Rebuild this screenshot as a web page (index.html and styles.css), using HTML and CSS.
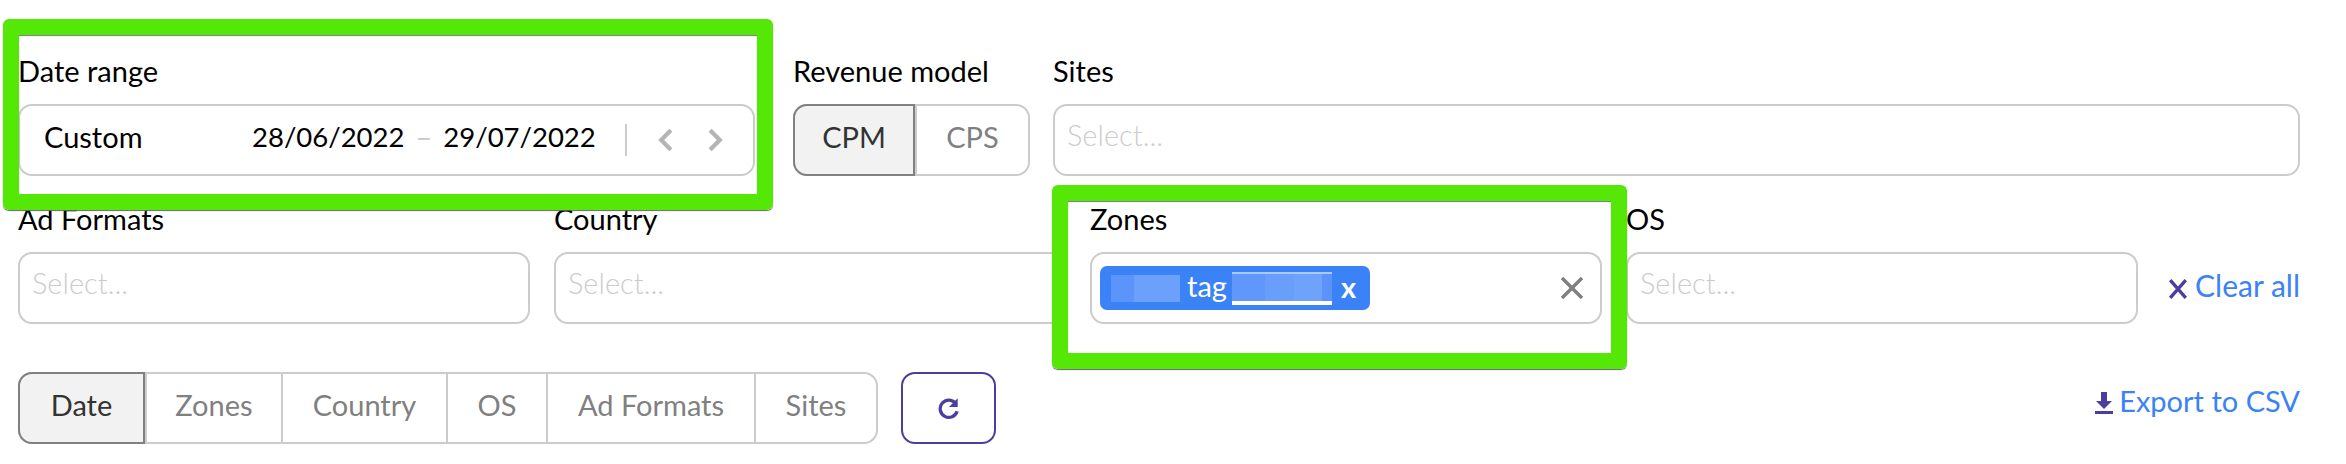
FILE: index.html
```html
<!DOCTYPE html>
<html>
<head>
    <title>Statistics filters</title>
    <link rel="stylesheet" href="styles.css">
</head>
<body>
    <form class="filters">
        <div class="row row-top">
            <div class="field field-date">
                <label>Date range</label>
                <div class="box date-box">
                    <span class="date-preset">Custom</span>
                    <span class="date-text">28/06/2022</span>
                    <span class="date-dash">–</span>
                    <span class="date-text">29/07/2022</span>
                    <span class="date-sep"></span>
                    <svg class="chevron chevron-prev" viewBox="0 0 14 22"><path d="M12 2 3 11l9 9"/></svg>
                    <svg class="chevron chevron-next" viewBox="0 0 14 22"><path d="M2 2l9 9-9 9"/></svg>
                </div>
            </div>
            <div class="field field-model">
                <label>Revenue model</label>
                <div class="segments">
                    <span class="segment active model-cpm">CPM</span>
                    <span class="segment model-cps">CPS</span>
                </div>
            </div>
            <div class="field field-grow">
                <label>Sites</label>
                <div class="box select"><span class="placeholder">Select...</span></div>
            </div>
        </div>

        <div class="row row-middle">
            <div class="field field-col">
                <label>Ad Formats</label>
                <div class="box select"><span class="placeholder">Select...</span></div>
            </div>
            <div class="field field-col">
                <label>Country</label>
                <div class="box select"><span class="placeholder">Select...</span></div>
            </div>
            <div class="field field-col">
                <label>Zones</label>
                <div class="box select select-zones">
                    <span class="tag">
                        <span class="blur blur-a"></span>
                        <span class="tag-text">tag</span>
                        <span class="blur blur-b"></span>
                        <span class="tag-x">x</span>
                    </span>
                    <svg class="clear-icon" viewBox="0 0 24 24"><path d="M2 2l20 20M22 2 2 22"/></svg>
                </div>
            </div>
            <div class="field field-col">
                <label>OS</label>
                <div class="box select"><span class="placeholder">Select...</span></div>
            </div>
            <a class="link link-clear" href="#">
                <svg class="link-x" viewBox="0 0 18 18"><path d="M2 1l14 16M16 1 2 17"/></svg>Clear all
            </a>
        </div>

        <div class="row row-bottom">
            <div class="segments">
                <span class="segment active group-date">Date</span>
                <span class="segment group-zones">Zones</span>
                <span class="segment group-country">Country</span>
                <span class="segment group-os">OS</span>
                <span class="segment group-formats">Ad Formats</span>
                <span class="segment group-sites">Sites</span>
            </div>
            <button class="refresh" type="button">
                <svg viewBox="0 0 20 24"><path d="M16 7.5A8 8 0 1 0 17.5 15"/><path class="fill" d="M18 3v8h-8z"/></svg>
            </button>
            <a class="link link-export" href="#">
                <svg class="download" viewBox="0 0 18 24"><path class="fill" d="M6 1h6v9h5l-8 8-8-8h5zM0 20h18v3H0z"/></svg>Export to CSV
            </a>
        </div>
    </form>

    <div class="mark mark-date"></div>
    <div class="mark mark-zones"></div>
</body>
</html>
```

FILE: styles.css
```css
* {
    box-sizing: border-box;
}

body {
    margin: 0;
    background-color: white;
    color: black;
    font-family: Lato, sans-serif;
    font-size: 29px;
    height: 464px;
    overflow: hidden;
    position: relative;
}

.filters {
    padding: 55px 46px 0 18px;
}

.row {
    display: flex;
}

.row-middle {
    margin-top: 27px;
    gap: 24px;
}

.row-bottom {
    margin-top: 48px;
    align-items: center;
}

.field label {
    display: block;
    height: 34px;
    line-height: 31px;
    margin-bottom: 15px;
}

.field-date {
    width: 737px;
    margin-right: 38px;
}

.field-model {
    width: 237px;
    margin-right: 23px;
}

.field-grow {
    flex: 1;
}

.field-col {
    width: 512px;
}

.box {
    height: 72px;
    border: 2px solid #ccc;
    border-radius: 14px;
    background-color: white;
}

.date-box {
    display: flex;
    align-items: center;
    padding-left: 24px;
}

.date-preset {
    width: 208px;
    padding-bottom: 8px;
}

.date-text {
    font-size: 27.5px;
    padding-bottom: 7px;
}

.date-dash {
    color: #ccc;
    margin: 0 11px;
    padding-bottom: 7px;
}

.date-sep {
    width: 2px;
    height: 32px;
    background-color: #ccc;
    margin: 0 31px 0 29px;
}

.chevron {
    width: 15px;
    height: 24px;
    fill: none;
    stroke: #b5b5b5;
    stroke-width: 4;
}

.chevron-next {
    margin-left: 35px;
}

.select {
    padding: 0 12px;
    display: flex;
    align-items: center;
}

.placeholder {
    color: #ccc;
    font-weight: 300;
    padding-bottom: 11px;
}

.segments {
    display: flex;
    height: 72px;
    border: 2px solid #ccc;
    border-radius: 14px;
    color: #808080;
}

.segment {
    display: flex;
    align-items: center;
    justify-content: center;
    border-left: 2px solid #ccc;
    padding-bottom: 7px;
}

.segment:first-child {
    border-left: none;
}

.segment.active {
    margin: -2px 0 -2px -2px;
    border: 2px solid #808080;
    border-radius: 14px 0 0 14px;
    background-color: #f2f2f2;
    color: #333;
}

.model-cpm {
    width: 122px;
}

.model-cps {
    flex: 1;
}

.group-date {
    width: 127px;
}

.group-zones {
    width: 136px;
}

.group-country {
    width: 165px;
}

.group-os {
    width: 100px;
}

.group-formats {
    width: 208px;
}

.group-sites {
    width: 122px;
}

.select-zones {
    justify-content: space-between;
    padding: 0 16px 0 8px;
}

.tag {
    display: flex;
    align-items: center;
    width: 270px;
    height: 44px;
    padding-left: 11px;
    border-radius: 7px;
    background-color: #3c82f7;
    color: white;
}

.tag-text {
    margin: 0 8px 0 7px;
    width: 37px;
    padding-bottom: 5px;
    white-space: nowrap;
}

.blur {
    display: block;
    height: 27px;
}

.blur-a {
    width: 69px;
    background: linear-gradient(90deg, #5b94fa 33%, #6ba0fb 33%);
}

.blur-b {
    width: 100px;
    height: 33px;
    background: linear-gradient(90deg, #5f97fa 33%, #6a9efb 33%, #6a9efb 62%, #6ea2fb 62%, #6ea2fb 90%, #5b93fa 90%);
    border-top: 2px solid #a9c8fc;
    border-bottom: 4px solid white;
}

.tag-x {
    margin-left: 9px;
    font-weight: 700;
    padding-bottom: 4px;
}

.clear-icon {
    width: 24px;
    height: 24px;
    fill: none;
    stroke: #808080;
    stroke-width: 3.5;
}

.link {
    display: flex;
    align-items: center;
    color: #3b82f6;
    text-decoration: none;
}

.link-clear {
    margin: 49px 0 0 auto;
    height: 72px;
    padding-bottom: 7px;
    font-size: 30px;
    white-space: nowrap;
}

.link-x {
    width: 20px;
    height: 20px;
    margin: 8px 7px 0 0;
    fill: none;
    stroke: #4c3d9e;
    stroke-width: 3;
}

.refresh {
    width: 95px;
    height: 72px;
    margin-left: 23px;
    border: 2px solid #4c3d9e;
    border-radius: 14px;
    background-color: white;
    display: flex;
    align-items: center;
    justify-content: center;
}

.refresh svg {
    width: 22px;
    height: 26px;
    fill: none;
    stroke: #4c3d9e;
    stroke-width: 3;
}

.refresh .fill {
    fill: #4c3d9e;
    stroke: none;
}

.link-export {
    margin-left: auto;
    margin-top: -16px;
}

.download {
    width: 18px;
    height: 24px;
    margin: 6px 6px 0 0;
}

.download .fill {
    fill: #4c3d9e;
}

/* highlight frames drawn over the screenshot */
.mark {
    position: absolute;
    border: 16px solid #55e706;
    border-radius: 6px;
    box-shadow: 0 1px 1px #666, inset 0 1px 1px #777;
    pointer-events: none;
}

.mark-date {
    left: 3px;
    top: 19px;
    width: 770px;
    height: 191px;
}

.mark-zones {
    left: 1052px;
    top: 185px;
    width: 575px;
    height: 184px;
}
```
